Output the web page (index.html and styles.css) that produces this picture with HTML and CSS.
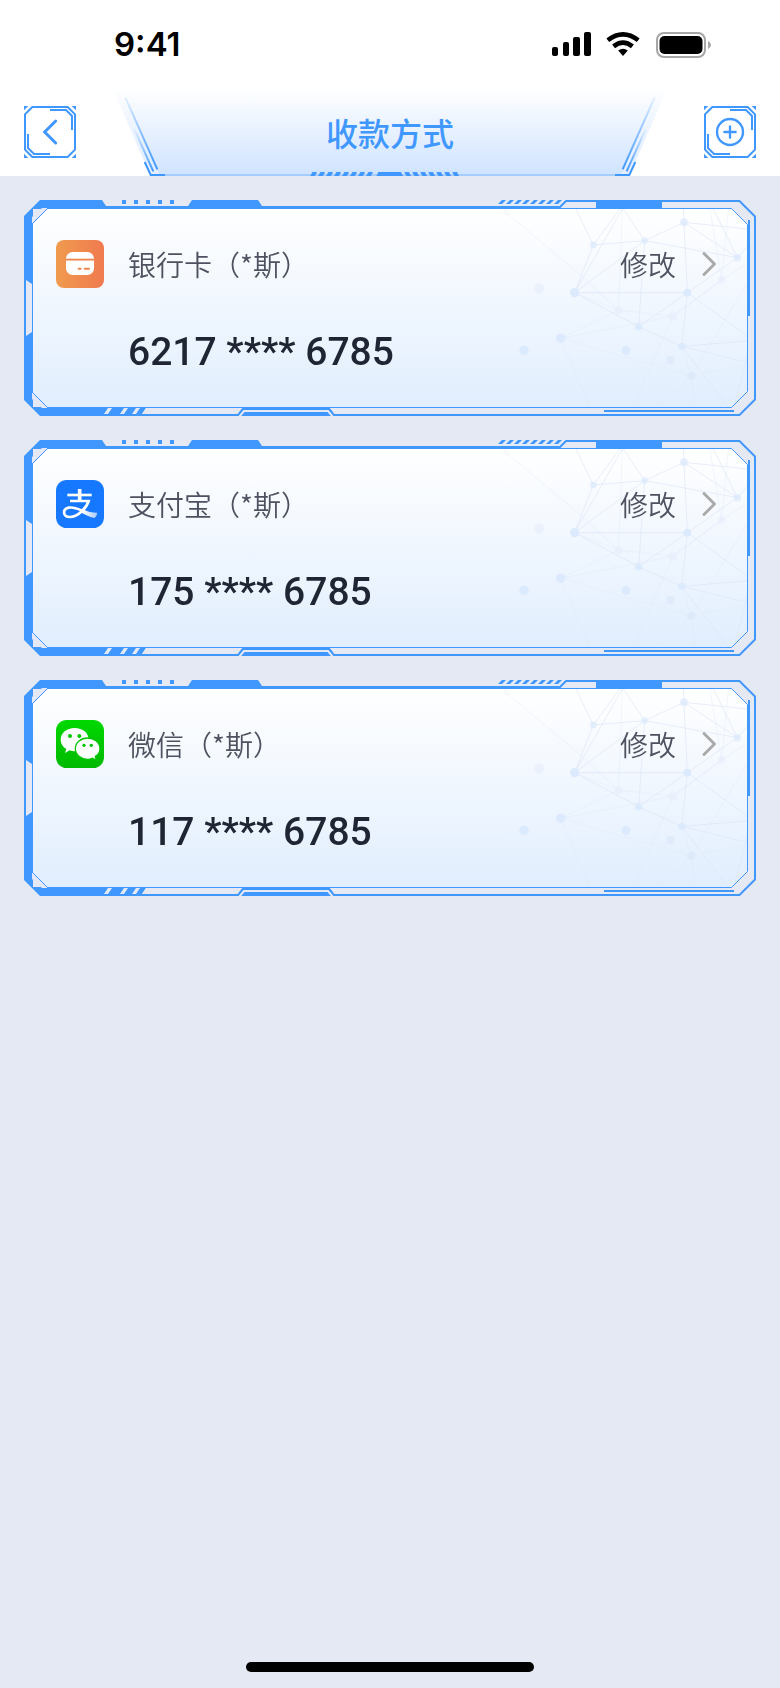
FILE: index.html
```html
<!DOCTYPE html>
<html lang="zh-CN">
<head>
<meta charset="utf-8">
<meta name="viewport" content="width=device-width, initial-scale=1">
<title>收款方式</title>
<link rel="stylesheet" href="styles.css">
</head>
<body>
<svg class="sprite" aria-hidden="true">
  <defs>
    <linearGradient id="panel-fill" gradientUnits="userSpaceOnUse" x1="0" y1="8" x2="0" y2="208">
      <stop offset="0" stop-color="#fff"/><stop offset="1" stop-color="#e1eefe"/>
    </linearGradient>
    <linearGradient id="bank-fill" x1="0" y1="0" x2="1" y2="0">
      <stop offset="0" stop-color="#f09b4e"/><stop offset="1" stop-color="#f07a50"/>
    </linearGradient>
    <linearGradient id="wechat-fill" x1="0" y1="0" x2="0" y2="1">
      <stop offset="0" stop-color="#00d800"/><stop offset="1" stop-color="#00b900"/>
    </linearGradient>
    <linearGradient id="tail-fill" gradientUnits="userSpaceOnUse" x1="80" y1="0" x2="124" y2="0">
      <stop offset="0" stop-color="#fff"/><stop offset="1" stop-color="#a5c9ff"/>
    </linearGradient>
    <path id="slash" d="M0 4L4 0H8L4 4Z"/>
  </defs>

  <symbol id="button-frame" viewBox="0 0 156 156">
    <path fill="none" stroke="#4098ff" stroke-width="6" d="M25 3H131L153 25V131L131 153H25L3 131V25ZM78 12H126L144 30V72M12 84V126L30 144H78"/>
    <path fill="#4098ff" d="M0 0H13L0 13ZM156 0V13L143 0ZM0 156V143L13 156ZM156 156H143L156 143Z"/>
  </symbol>

  <symbol id="card-frame">
    <svg width="50%" height="216">
      <path fill="#4098ff" d="M16 0H78L82 6H164L168 0H234L238 6H2000V9H9V207H2000V208H122L118 214H2000V216H16L0 200V16Z"/>
      <path fill="url(#panel-fill)" d="M24 9H2000V207H24L9 192V24Z"/>
      <path fill="#e5e9f4" d="M8 17L18 8H24L8 24ZM8 199L18 208H24L8 192ZM2 80L8 84V132L2 136ZM80 214L84 208H88L84 214ZM96 214L100 208H104L100 214ZM108 214L112 208H116L112 214ZM118 214L122 208H2000V214Z"/>
      <path fill="none" stroke="#4098ff" d="M8 24L24 8M8 192L24 208"/>
      <path fill="#4098ff" d="M98 0h4v4h-4zM110 0h4v4h-4zM122 0h4v4h-4zM134 0h4v4h-4zM146 0h4v4h-4zM212 216L219 207H305L312 216Z"/>
      <path fill="none" stroke="#e5e9f4" stroke-width="2" d="M215 217L220 211H304L309 217"/>
    </svg>
    <svg x="50%" width="50%" height="216">
      <svg x="100%" width="1" height="216" overflow="visible">
        <path fill="url(#panel-fill)" d="M-2000 9H-24L-9 24V192L-24 207H-2000Z"/>
        <g transform="translate(-276 -10) scale(.33333)" stroke="#dde5f6" stroke-width="3" fill="none">
          <path opacity=".65" d="M340 165L494 152L612 97L802 117M340 165L284 308L427 57M340 165L420 57M340 165L288 57M284 308L494 152L772 203M494 152L430 57M494 152L476 410L284 308H622L772 203L700 57M612 97L610 57M612 97L622 308L476 410L605 469L622 308L802 438M612 97L772 203L802 170M605 469L802 453M605 469L798 516L802 500M605 469L745 652M798 516L760 652"/>
          <path opacity=".35" d="M78 67L284 240L416 360L578 379L725 270L802 220M284 308L416 360L427 57M242 445L416 360M242 445L578 379L460 652M242 445L634 558L802 525M242 445L330 652M634 558L540 652M634 558L648 652M634 558L605 469M634 558L802 280M690 57L725 270L578 379M725 270L745 57"/>
        </g>
        <g transform="translate(-276 -10) scale(.33333)" fill="#dceafd">
          <g opacity=".7"><circle cx="340" cy="165" r="10"/><circle cx="494" cy="152" r="10"/><circle cx="612" cy="97" r="12"/><circle cx="772" cy="203" r="11"/></g>
          <circle cx="284" cy="308" r="14"/><circle cx="622" cy="308" r="12"/><circle cx="476" cy="410" r="11"/><circle cx="605" cy="469" r="11"/><circle cx="242" cy="445" r="14"/><circle cx="132" cy="481" r="14"/><circle cx="438" cy="481" r="13"/>
          <g fill="#e7edfb" opacity=".6"><circle cx="78" cy="67" r="9" opacity=".4"/><circle cx="177" cy="296" r="15"/><circle cx="416" cy="360" r="12"/><circle cx="578" cy="379" r="13"/><circle cx="725" cy="270" r="11"/></g>
          <g fill="#dce8f9" opacity=".7"><circle cx="572" cy="510" r="12"/><circle cx="634" cy="558" r="13"/></g>
        </g>
        <path fill="none" stroke="#4098ff" d="M-196 8.500H-24.500L-8.500 24.500V191.500L-24.500 207.500H-2000"/>
        <path fill="none" stroke="#4098ff" stroke-width="2" d="M-196 7L-190 1H-16.500L-1 16.500V199.500L-16.500 215H-2000"/>
        <path fill="#4098ff" d="M-2000 6H-195V9H-2000ZM-160 0H-94V9H-160ZM-8 20H-6V116H-8ZM-152 210H-22V212H-152Z"/>
        <g fill="#4098ff">
          <use href="#slash" x="-258"/><use href="#slash" x="-250"/><use href="#slash" x="-242"/><use href="#slash" x="-234"/><use href="#slash" x="-226"/><use href="#slash" x="-218"/><use href="#slash" x="-210"/><use href="#slash" x="-202"/>
        </g>
      </svg>
    </svg>
  </symbol>

  <symbol id="chevron" viewBox="0 0 32 32">
    <path fill="none" stroke="#aaa" stroke-width="3" stroke-linecap="round" stroke-linejoin="round" d="M12 5.500L22.500 16L12 26.500"/>
  </symbol>
</svg>

<div class="screen">
  <header class="header">
    <div class="status">
      <time class="clock">9:41</time>
      <svg class="status-icons" viewBox="0 0 160 28" aria-label="信号、无线网络、电量">
        <rect x="0" y="17" width="6" height="9" rx="2"/><rect x="11" y="12" width="6" height="14" rx="2"/><rect x="21" y="7" width="7" height="19" rx="2"/><rect x="32" y="2" width="7" height="24" rx="2"/>
        <path fill="none" stroke="#000" stroke-width="4.600" d="M55.800 10.200Q71 -1.600 86.200 10.200M61.600 16.400Q71 8.800 80.400 16.400"/>
        <path d="M66.200 20.600Q71 16.800 75.800 20.600L71 26Z"/>
        <rect x="105" y="3" width="48" height="24" rx="7" fill="none" stroke="#a6a6a6" stroke-width="2"/>
        <rect x="107.500" y="6" width="43" height="18" rx="5"/>
        <path fill="#a6a6a6" d="M156 11Q159 12.500 159 15T156 19Z"/>
      </svg>
    </div>
    <nav class="nav">
      <button class="icon-button" type="button" aria-label="返回">
        <svg viewBox="0 0 156 156"><use href="#button-frame"/><path fill="none" stroke="#4098ff" stroke-width="9" stroke-linecap="round" d="M95 45L62 78L95 111"/></svg>
      </button>
      <div class="title-plate">
        <svg class="plate-art" viewBox="330 264 1680 264" aria-hidden="true">
          <defs>
            <linearGradient id="plate-fill" x1="0" y1="0" x2="0" y2="1"><stop offset="0" stop-color="#fff"/><stop offset="1" stop-color="#cfe3ff"/></linearGradient>
            <linearGradient id="band-fill" x1="0" y1="0" x2="0" y2="1"><stop offset="0" stop-color="#fff" stop-opacity="0"/><stop offset="1" stop-color="#fff" stop-opacity=".4"/></linearGradient>
            <linearGradient id="line-a" gradientUnits="userSpaceOnUse" x1="0" y1="290" x2="0" y2="508"><stop offset="0" stop-color="#4098ff" stop-opacity=".1"/><stop offset="1" stop-color="#4098ff"/></linearGradient>
            <linearGradient id="line-b" gradientUnits="userSpaceOnUse" x1="0" y1="380" x2="0" y2="514"><stop offset="0" stop-color="#4098ff" stop-opacity="0"/><stop offset="1" stop-color="#4098ff"/></linearGradient>
            <path id="hatch" d="M0 528L6 516H20L14 528Z"/>
            <path id="hatch-back" d="M6 528L0 516H14L20 528Z"/>
            <g id="plate-side">
              <path fill="url(#band-fill)" d="M338 264L452 528H480L372 290V264Z"/>
              <path fill="none" stroke="url(#line-a)" stroke-width="6" d="M376 292L472 508"/>
              <path fill="none" stroke="url(#line-b)" stroke-width="6" d="M402 385L460 514"/>
              <path fill="#a6cdff" d="M495 522H1170V528H495Z"/>
              <path fill="none" stroke="#4098ff" stroke-width="6" d="M434 486L452 525H495"/>
            </g>
          </defs>
          <path fill="url(#plate-fill)" d="M338 264H2002L1888 528H452Z"/>
          <use href="#plate-side"/>
          <use href="#plate-side" transform="translate(2340 0) scale(-1 1)"/>
          <g fill="#4098ff">
            <use href="#hatch" x="931"/><use href="#hatch" x="955"/><use href="#hatch" x="979"/><use href="#hatch" x="1003"/><use href="#hatch" x="1027"/><use href="#hatch" x="1051"/><use href="#hatch" x="1075"/><use href="#hatch" x="1099"/>
            <path d="M1129 528L1135 516H1203L1209 528Z"/>
            <use href="#hatch-back" x="1213"/><use href="#hatch-back" x="1237"/><use href="#hatch-back" x="1261"/><use href="#hatch-back" x="1285"/><use href="#hatch-back" x="1309"/><use href="#hatch-back" x="1333"/><use href="#hatch-back" x="1357"/>
          </g>
        </svg>
        <h1 class="title">收款方式</h1>
      </div>
      <button class="icon-button" type="button" aria-label="添加">
        <svg viewBox="0 0 156 156"><use href="#button-frame"/><g fill="none" stroke="#4098ff" stroke-width="7" stroke-linecap="round"><circle cx="78" cy="78" r="39"/><path d="M61 78H95M78 61V95"/></g></svg>
      </button>
    </nav>
  </header>

  <main class="cards">
    <section class="card">
      <svg class="card-art" aria-hidden="true"><use href="#card-frame" width="100%" height="216"/></svg>
      <div class="card-head">
        <svg class="brand" viewBox="0 0 144 144" aria-hidden="true">
          <rect width="144" height="144" rx="24" fill="url(#bank-fill)"/>
          <rect x="30" y="36" width="84" height="69" rx="20" fill="#fff"/>
          <path fill="#fbd9c8" d="M30 54H114V63H30Z"/><path fill="#ef8650" d="M30 57H114V61H30Z"/>
          <path stroke="#ef8650" stroke-width="6" stroke-linecap="round" d="M68 86H74M86 86H99"/>
        </svg>
        <h2 class="name">银行卡（*斯）</h2>
        <a class="edit" href="#edit-bank">修改<svg class="arrow" aria-hidden="true"><use href="#chevron"/></svg></a>
      </div>
      <p class="number">6217 **** 6785</p>
    </section>

    <section class="card">
      <svg class="card-art" aria-hidden="true"><use href="#card-frame" width="100%" height="216"/></svg>
      <div class="card-head">
        <svg class="brand" viewBox="0 0 144 144" aria-hidden="true">
          <rect width="144" height="144" rx="32" fill="#1677ff"/>
          <g fill="none" stroke="#fff" stroke-width="8">
            <path d="M34 45H107"/><path stroke-width="11" d="M71 27V62"/>
            <path d="M42 63H98C92 82 68 110 42 111C20 111 18 88 38 83C55 79 72 90 92 97"/>
          </g>
          <path fill="url(#tail-fill)" d="M76 87C92 94 106 98 124 98Q122 110 116 114C102 112 88 104 72 96Z"/>
        </svg>
        <h2 class="name">支付宝（*斯）</h2>
        <a class="edit" href="#edit-alipay">修改<svg class="arrow" aria-hidden="true"><use href="#chevron"/></svg></a>
      </div>
      <p class="number">175 **** 6785</p>
    </section>

    <section class="card">
      <svg class="card-art" aria-hidden="true"><use href="#card-frame" width="100%" height="216"/></svg>
      <div class="card-head">
        <svg class="brand" viewBox="0 0 144 144" aria-hidden="true">
          <rect width="144" height="144" rx="32" fill="url(#wechat-fill)"/>
          <path fill="#fff" d="M56 24C32 24 14 39 14 59C14 70 20 80 31 87L27 99L41 91Q48 94 56 94C80 94 98 79 98 59S80 24 56 24Z"/>
          <g fill="#00c800"><circle cx="42" cy="48" r="6"/><circle cx="70" cy="48" r="6"/></g>
          <path fill="#fff" stroke="#00c400" stroke-width="4" d="M95 54C75 54 58 68 58 86S75 118 95 118Q103 118 109 115L121 121L118 109C127 104 132 96 132 86C132 68 115 54 95 54Z"/>
          <g fill="#00c400"><circle cx="84" cy="76" r="5"/><circle cx="106" cy="76" r="5"/></g>
        </svg>
        <h2 class="name">微信（*斯）</h2>
        <a class="edit" href="#edit-wechat">修改<svg class="arrow" aria-hidden="true"><use href="#chevron"/></svg></a>
      </div>
      <p class="number">117 **** 6785</p>
    </section>
  </main>

  <div class="home-bar"></div>
</div>
</body>
</html>
```
FILE: styles.css
```css
* {
  box-sizing: border-box;
}

body {
  margin: 0;
  background: #e5e9f4;
  font-family: "Noto Sans CJK SC", "Noto Sans", sans-serif;
}

.sprite {
  position: absolute;
  width: 0;
  height: 0;
}

.screen {
  display: flex;
  flex-direction: column;
  min-height: 100vh;
}

.header {
  background: #fff;
}

.status {
  display: flex;
  align-items: center;
  justify-content: space-between;
  height: 88px;
  padding: 0 68px 0 114px;
}

.clock {
  font: 600 33px/40px Inter, sans-serif;
  color: #000;
}

.status-icons {
  width: 160px;
  height: 28px;
}

.nav {
  display: flex;
  align-items: center;
  justify-content: space-between;
  height: 88px;
  padding: 0 24px;
}

.icon-button {
  width: 52px;
  height: 52px;
  padding: 0;
  border: 0;
  background: none;
  cursor: pointer;
}

.icon-button svg {
  display: block;
  width: 100%;
  height: 100%;
}

.title-plate {
  position: relative;
  display: flex;
  align-items: center;
  justify-content: center;
  width: 560px;
  height: 88px;
}

.plate-art {
  position: absolute;
  inset: 0;
  width: 100%;
  height: 100%;
}

.title {
  position: relative;
  margin: 0;
  font-size: 32px;
  font-weight: 500;
  line-height: 48px;
  color: #4098ff;
}

.cards {
  display: flex;
  flex: 1;
  flex-direction: column;
  gap: 24px;
  padding: 24px;
}

.card {
  position: relative;
  display: flex;
  flex-direction: column;
  gap: 40px;
  padding: 40px 32px;
}

.card-art {
  position: absolute;
  inset: 0;
  width: 100%;
  height: 100%;
}

.card-head {
  position: relative;
  display: flex;
  align-items: center;
  gap: 24px;
}

.brand {
  width: 48px;
  height: 48px;
}

.name {
  flex: 1;
  margin: 0;
  font-size: 28px;
  font-weight: 350;
  line-height: 40px;
  color: #4e5260;
}

.edit {
  display: flex;
  align-items: center;
  gap: 16px;
  font-size: 28px;
  font-weight: 350;
  line-height: 40px;
  color: #4e5260;
  text-decoration: none;
}

.arrow {
  width: 32px;
  height: 32px;
}

.number {
  position: relative;
  margin: 0;
  padding-left: 72px;
  font: 500 39px/48px Roboto, sans-serif;
  color: #1f2533;
}

.home-bar {
  align-self: center;
  width: 288px;
  height: 10px;
  margin-bottom: 16px;
  border-radius: 5px;
  background: #000;
}
```
